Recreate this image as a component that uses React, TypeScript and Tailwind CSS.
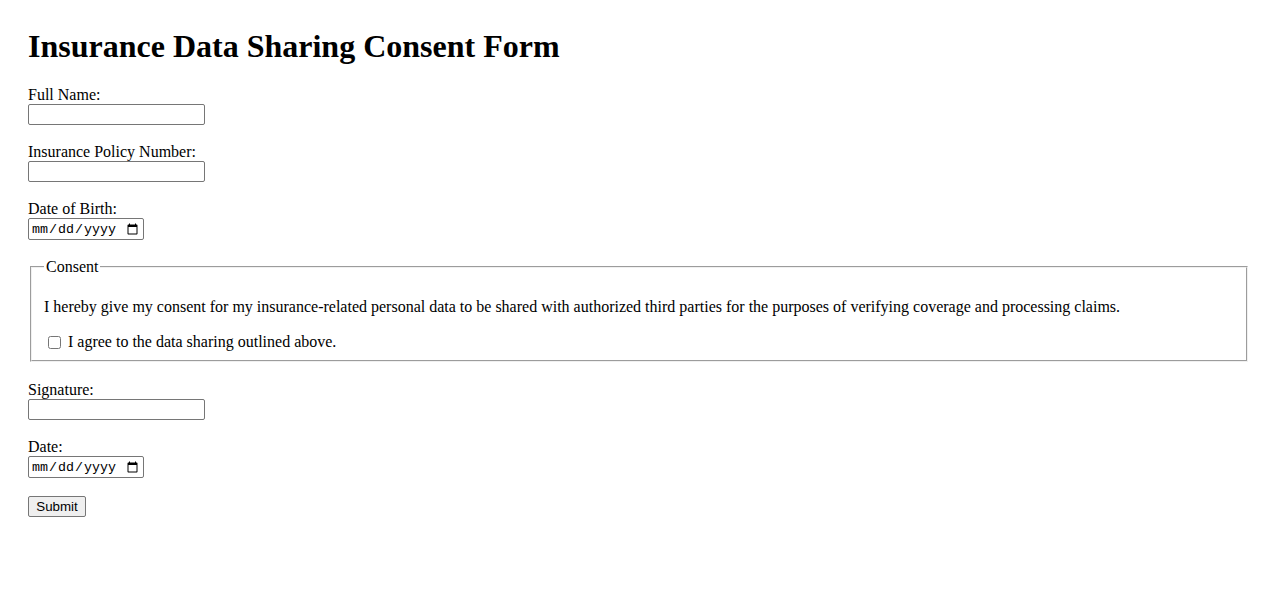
export default function App() {
  const inputCls =
    "w-[177px] h-[21px] border border-[#767676] rounded-[2px] bg-white px-[2px] py-[1px] text-[13.333px] leading-[normal] font-['Liberation_Sans',Arial,sans-serif] align-baseline"
  const dateCls =
    "w-[116px] h-[22px] border border-[#767676] rounded-[2px] bg-white px-[2px] py-[1px] text-[13.333px] leading-[normal] font-['Liberation_Mono',monospace] align-baseline"

  return (
    <div className="min-h-screen bg-white p-[28px] font-['Liberation_Serif','Times_New_Roman',serif] text-base leading-[normal] text-black">
      <h1 className="mb-[21.44px] text-[32px] font-bold leading-[normal]">
        Insurance Data Sharing Consent Form
      </h1>

      <form onSubmit={(e) => e.preventDefault()}>
        {/* Personal details */}
        <div className="mb-[18px]">
          <label htmlFor="fullName" className="block">Full Name:</label>
          <input id="fullName" type="text" className={inputCls} />
        </div>

        <div className="mb-[18px]">
          <label htmlFor="policy" className="block">Insurance Policy Number:</label>
          <input id="policy" type="text" className={inputCls} />
        </div>

        <div className="mb-[18px]">
          <label htmlFor="dob" className="block">Date of Birth:</label>
          <input id="dob" type="date" className={dateCls} />
        </div>

        {/* Consent */}
        <fieldset className="mx-[2px] mb-[19px] border-2 border-[#f0f0f0] px-[12px] pt-[6px] pb-[8px] [border-style:groove]">
          <legend className="px-[2px]">Consent</legend>
          <p className="mt-4 mb-[17px]">
            I hereby give my consent for my insurance-related personal data to be shared with authorized third parties for the purposes of verifying coverage and processing claims.
          </p>
          <label>
            <input type="checkbox" className="m-[3px_3px_3px_4px] h-[13px] w-[13px] align-[-2px]" /> I agree to the data sharing outlined above.
          </label>
        </fieldset>

        <div className="mb-[18px]">
          <label htmlFor="signature" className="block">Signature:</label>
          <input id="signature" type="text" className={inputCls} />
        </div>

        <div className="mb-[18px]">
          <label htmlFor="date" className="block">Date:</label>
          <input id="date" type="date" className={dateCls} />
        </div>

        <button
          type="submit"
          className="w-[58px] rounded-[2px] border border-[#767676] bg-[#efefef] py-[2px] font-['Liberation_Sans',Arial,sans-serif] text-[13.333px] leading-[normal]"
        >
          Submit
        </button>
      </form>
    </div>
  )
}
